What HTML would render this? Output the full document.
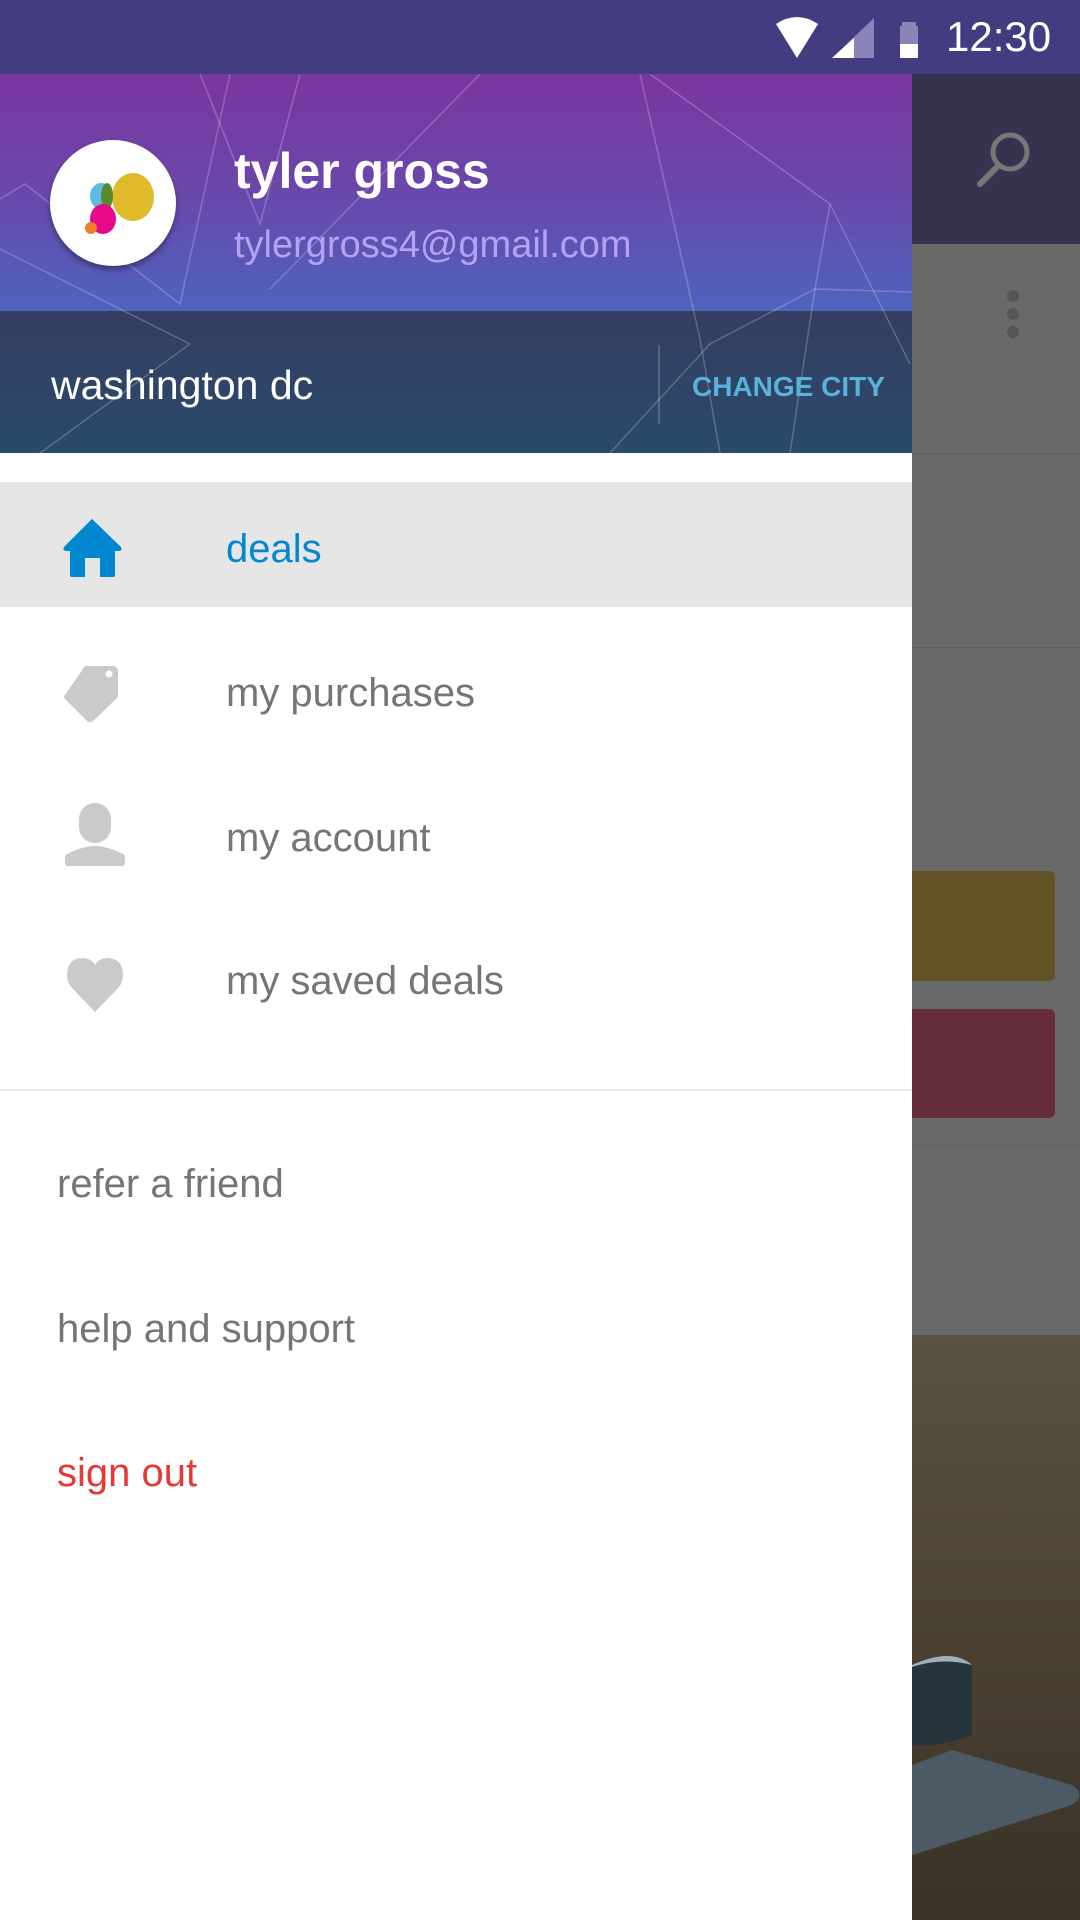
<!DOCTYPE html>
<html><head><meta charset="utf-8"><style>
*{margin:0;padding:0;box-sizing:border-box}
body{width:1080px;height:1920px;position:relative;overflow:hidden;font-family:"Liberation Sans",Roboto,sans-serif;background:#666}
.abs{position:absolute}
.t{position:absolute;white-space:nowrap;line-height:1}
</style></head><body>
<div class="abs" style="left:0;top:74px;width:1080px;height:170px;background:#37334f"></div>
<div class="abs" style="left:0;top:244px;width:1080px;height:1091px;background:#696969"></div>
<div class="abs" style="left:912px;top:453px;width:168px;height:1px;background:#5c5c5c"></div>
<div class="abs" style="left:912px;top:647px;width:168px;height:1px;background:#5c5c5c"></div>
<div class="abs" style="left:900px;top:871px;width:155px;height:110px;background:#625327;border-radius:6px"></div>
<div class="abs" style="left:900px;top:1009px;width:155px;height:109px;background:#652d3b;border-radius:6px"></div>
<div class="abs" style="left:912px;top:1145px;width:168px;height:1px;background:#606060"></div>
<div class="abs" style="left:912px;top:1335px;width:168px;height:585px;background:linear-gradient(#5a5240,#4e4535 40%,#3a3128)"></div>
<svg class="abs" style="left:912px;top:1335px" width="168" height="585"><path d="M0 430 L40 415 L160 450 Q175 460 160 470 L0 520Z" fill="#4b5a64"/><path d="M0 330 Q40 318 60 330 L60 400 Q30 412 0 410Z" fill="#27343c"/><path d="M0 330 Q40 312 60 330 Q30 322 0 332Z" fill="#9fb0b6"/></svg>
<svg class="abs" style="left:970px;top:128px" width="70" height="64"><circle cx="40" cy="24" r="17" fill="none" stroke="#777" stroke-width="5"/><line x1="28" y1="38" x2="10" y2="56" stroke="#777" stroke-width="6" stroke-linecap="round"/></svg>
<div class="abs" style="left:1007px;top:290px;width:12px;height:12px;border-radius:6px;background:#555;box-shadow:0 18px 0 #555,0 36px 0 #555"></div>
<div class="abs" style="left:0;top:0;width:1080px;height:74px;background:#443c80"></div>
<svg class="abs" style="left:770px;top:14px" width="170" height="46"><path d="M6 10 Q27 -4 48 10 L27 44Z" fill="#fff"/><path d="M104 44 L104 4 L62 44Z" fill="#8a84b8"/><path d="M84 44 L84 24 L62 44Z" fill="#fff"/><rect x="132" y="8" width="14" height="4" fill="#8a84b8"/><rect x="130" y="12" width="18" height="18" fill="#8a84b8"/><rect x="130" y="30" width="18" height="14" fill="#fff"/></svg>
<div class="t" style="left:946px;top:16px;font-size:42px;color:#fff">12:30</div>
<div class="abs" style="left:0;top:74px;width:912px;height:1846px;background:#fff"></div>
<div class="abs" style="left:0;top:74px;width:912px;height:237px;background:linear-gradient(#7b36a0,#6a47aa 50%,#4d64be)"></div>
<div class="abs" style="left:0;top:311px;width:912px;height:142px;background:linear-gradient(#343e62,#2a4a6a)"></div>
<svg class="abs" style="left:0;top:74px" width="912" height="379"><g stroke="rgba(255,255,255,0.22)" stroke-width="1.5" fill="none"><path d="M200 0 L260 150 L300 0"/><path d="M230 0 L180 230 L25 110 L0 125"/><path d="M0 175 L190 270 L40 379"/><path d="M640 0 L700 265 L720 379"/><path d="M650 0 L830 130 L910 290"/><path d="M830 130 L815 215 L790 379"/><path d="M815 215 L912 218"/><path d="M815 215 L710 270 L610 379"/><path d="M480 0 L270 215"/></g><line x1="659" y1="271" x2="659" y2="350" stroke="rgba(255,255,255,0.25)" stroke-width="1.5"/></svg>
<div class="abs" style="left:50px;top:140px;width:126px;height:126px;border-radius:50%;background:#fff;box-shadow:0 4px 6px rgba(0,0,0,0.35)"></div>
<svg class="abs" style="left:50px;top:140px" width="126" height="126"><ellipse cx="83" cy="57" rx="21" ry="24" fill="#dfbb2c"/><ellipse cx="51" cy="56" rx="11" ry="13" fill="#5bbde0"/><ellipse cx="57" cy="56" rx="6" ry="13" fill="#5a8a2e"/><ellipse cx="53" cy="79" rx="13" ry="15" fill="#e8088a"/><circle cx="41" cy="88" r="6" fill="#ef7d2a"/></svg>
<div class="t" style="left:234px;top:146px;font-size:50px;font-weight:bold;color:#fff">tyler gross</div>
<div class="t" style="left:234px;top:226px;font-size:38px;color:#b6a2f2">tylergross4@gmail.com</div>
<div class="t" style="left:51px;top:365px;font-size:41px;color:#fff">washington dc</div>
<div class="t" style="left:692px;top:373px;font-size:28px;font-weight:bold;color:#58b2dc">CHANGE CITY</div>
<div class="abs" style="left:0;top:482px;width:912px;height:125px;background:#e6e6e6"></div>
<svg class="abs" style="left:60px;top:515px" width="70" height="65"><path d="M32 4 L4 32 Q2 36 7 36 L10 36 L10 60 Q10 62 12 62 L25 62 L25 43 L40 43 L40 62 L53 62 Q55 62 55 60 L55 36 L58 36 Q63 36 61 32 Z" fill="#0288d1"/></svg>
<div class="t" style="left:226px;top:529px;font-size:40px;color:#0288d1">deals</div>
<svg class="abs" style="left:60px;top:662px" width="62" height="62"><path d="M25 4 L52 4 Q58 4 58 10 L58 32 Q58 35 56 37 L33 59 Q30 62 27 59 L5 37 Q3 35 5 33 Z" fill="#cacaca"/><circle cx="49" cy="12" r="3.5" fill="#fff"/></svg>
<div class="t" style="left:226px;top:673px;font-size:40px;color:#757575">my purchases</div>
<svg class="abs" style="left:62px;top:800px" width="70" height="70"><rect x="17" y="3" width="32" height="40" rx="16" fill="#cacaca"/><path d="M3 58 Q3 54 7 53 Q22 46 33 46 Q44 46 59 53 Q63 54 63 58 L63 63 Q63 66 60 66 L6 66 Q3 66 3 63Z" fill="#cacaca"/></svg>
<div class="t" style="left:226px;top:818px;font-size:40px;color:#757575">my account</div>
<svg class="abs" style="left:64px;top:952px" width="64" height="66"><path d="M31 60 L8 36 Q3 31 3 23 Q3 7 18 6 Q27 6 31 13 Q35 6 44 6 Q59 7 59 23 Q59 31 54 36 Z" fill="#cacaca"/></svg>
<div class="t" style="left:226px;top:961px;font-size:40px;color:#757575">my saved deals</div>
<div class="abs" style="left:0;top:1089px;width:912px;height:2px;background:#e4e8ec"></div>
<div class="t" style="left:57px;top:1164px;font-size:40px;color:#757575">refer a friend</div>
<div class="t" style="left:57px;top:1309px;font-size:40px;color:#757575">help and support</div>
<div class="t" style="left:57px;top:1453px;font-size:40px;color:#e53935">sign out</div>
</body></html>
